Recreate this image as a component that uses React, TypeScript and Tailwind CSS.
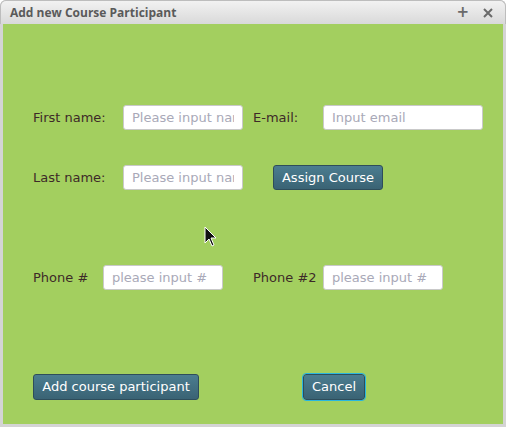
import type { ReactNode } from "react";

const font = { fontFamily: '"DejaVu Sans", Verdana, sans-serif' };

function Label({ children, className }: { children: ReactNode; className: string }) {
  return <span className={`shrink-0 text-[13px] text-[#3d2a28] ${className}`}>{children}</span>;
}

function Field({ placeholder, className }: { placeholder: string; className: string }) {
  return (
    <input
      placeholder={placeholder}
      className={`h-[25px] shrink-0 rounded-[3px] border border-[#c9c9c9] bg-white px-2 text-[13px] text-[#333] placeholder:text-[#a9a9b8] focus:outline-none ${className}`}
    />
  );
}

function Btn({ children, className = "" }: { children: ReactNode; className?: string }) {
  return (
    <button
      className={`h-[25px] shrink-0 rounded-[3px] border border-[#2e4d5b] bg-gradient-to-b from-[#4b7d90] to-[#3a6374] text-[13px] text-white ${className}`}
    >
      {children}
    </button>
  );
}

export default function App() {
  return (
    <div className="relative h-[427px] w-[506px] overflow-hidden bg-white" style={font}>
      <div className="flex h-full flex-col rounded-t-[6px] border-x-[3px] border-b-[3px] border-[#d4d4d4] bg-[#d4d4d4]">
        <div className="-mx-[3px] flex h-[24px] items-center rounded-t-[6px] border border-b-0 border-[#bdbdbd] bg-gradient-to-b from-[#f2f2f2] to-[#d9d9d9] px-[9px]">
          <span
            className="flex-1 text-[12px] font-bold text-[#5a5a5a]"
            style={{ fontFamily: '"Open Sans", "DejaVu Sans", sans-serif' }}
          >
            Add new Course Participant
          </span>
          <span className="mr-[14px] text-[15px] font-bold leading-none text-[#6a6a6a]">+</span>
          <svg width="10" height="10" viewBox="0 0 10 10" className="mr-[3px]">
            <path d="M1 1 L9 9 M9 1 L1 9" stroke="#6a6a6a" strokeWidth="2" />
          </svg>
        </div>
        <div className="flex flex-1 flex-col bg-[#a3cf5f] pl-[30px] pt-[81px]">
          <div className="flex items-center">
            <Label className="w-[90px]">First name:</Label>
            <Field placeholder="Please input name" className="w-[120px]" />
            <Label className="ml-[10px] w-[70px]">E-mail:</Label>
            <Field placeholder="Input email" className="w-[160px]" />
          </div>
          <div className="mt-[35px] flex items-center">
            <Label className="w-[90px]">Last name:</Label>
            <Field placeholder="Please input name" className="w-[120px]" />
            <Btn className="ml-[30px] w-[110px]">Assign Course</Btn>
          </div>
          <div className="mt-[75px] flex items-center">
            <Label className="w-[70px]">Phone #</Label>
            <Field placeholder="please input #" className="w-[120px]" />
            <Label className="ml-[30px] w-[70px]">Phone #2</Label>
            <Field placeholder="please input #" className="w-[120px]" />
          </div>
          <div className="mt-[84px] flex items-center">
            <Btn className="h-[26px] w-[166px]">Add course participant</Btn>
            <Btn className="ml-[104px] h-[26px] w-[62px] outline outline-[1px] outline-[#29b6e0]">Cancel</Btn>
          </div>
        </div>
      </div>
      <svg className="absolute left-[204px] top-[226px]" width="14" height="22" viewBox="0 0 14 22">
        <path d="M1 1 L1 17 L5 13 L8 20 L10 19 L7 12 L12 12 Z" fill="#111" stroke="#fff" strokeWidth="1" />
      </svg>
    </div>
  );
}
